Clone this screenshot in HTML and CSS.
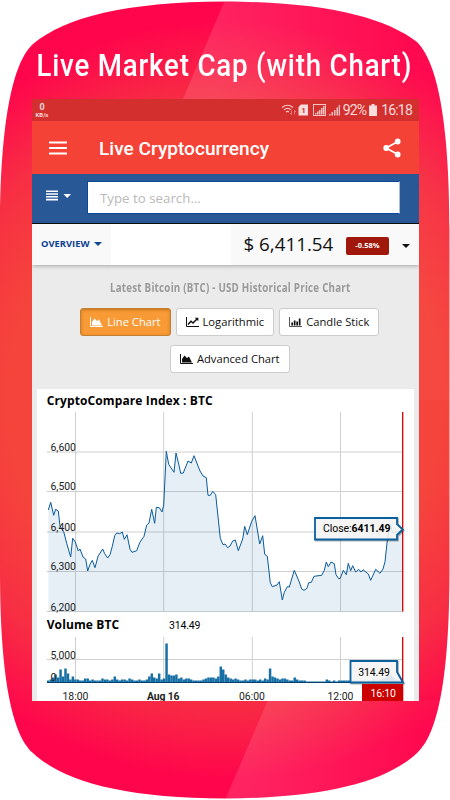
FILE: index.html
```html
<!DOCTYPE html>
<html lang="en">
    <head>
        <meta charset="utf-8">
        <title>Live Cryptocurrency</title>
        <link rel="stylesheet" href="styles.css">
        <script src="chart.js" defer></script>
    </head>
    <body>
        <div class="promo">
            <svg class="backdrop" viewBox="0 0 450 800">
                <defs>
                    <radialGradient id="red" gradientUnits="userSpaceOnUse" cx="225" cy="400" r="400">
                        <stop offset="0.55" stop-color="#f5443c"/>
                        <stop offset="0.75" stop-color="#f72e44"/>
                        <stop offset="0.95" stop-color="#ff054c"/>
                    </radialGradient>
                    <linearGradient id="shine" x1="0.1" y1="0" x2="0.85" y2="0">
                        <stop offset="0" stop-color="#fff" stop-opacity="0.12"/>
                        <stop offset="1" stop-color="#fff" stop-opacity="0.02"/>
                    </linearGradient>
                    <clipPath id="blob">
                        <path d="M225 1.500C125 2 66 17 33 44C9 66 0 140 0 230V570C0 662 9 732 33 753C64 782 125 798 225 798.500C325 798 386 782 417 753C441 732 449.500 662 449.500 570V230C449.500 140 441 66 417 42C384 17 325 2 225 1.500Z"/>
                    </clipPath>
                </defs>
                <g clip-path="url(#blob)">
                    <rect width="450" height="800" fill="url(#red)"/>
                    <path d="M225 0L183 99V400H450V0Z" fill="url(#shine)"/>
                    <path d="M268 700L225 800H450V700Z" fill="url(#shine)"/>
                </g>
            </svg>
            <h1 class="headline"><span>Live Market Cap (with Chart)</span></h1>

            <div class="phone">
                <div class="statusBar">
                    <div class="speed"><b>0</b><small>KB/s</small></div>
                    <div class="statusIcons">
                        <svg width="61" height="14" viewBox="0 0 61 14">
                            <g fill="none" stroke="#f5c5c5" stroke-width="1.2">
                                <path d="M1 4.500Q6.500 0 12 4.500M3 6.800Q6.500 4 10 6.800M5 9Q6.500 7.800 8 9"/>
                                <path d="M10.500 7.500V11.500M9 10L10.500 11.500M13.500 11.500V7.500M13.500 7.500L15 9" stroke-width="0.7" opacity="0.7"/>
                                <rect x="32.500" y="1.500" width="12" height="11" stroke-width="1"/>
                            </g>
                            <path fill="#fbdcdc" d="M17.500 4L20 1.500H27V12.500H17.500Z"/>
                            <text class="simNumber" x="20.300" y="10.300">1</text>
                            <path fill="#f5c5c5" d="M34 11.500V10H35.500V11.500ZM36 11.500V8.500H37.500V11.500ZM38 11.500V7H39.500V11.500ZM40 11.500V5H41.500V11.500ZM42 11.500V3H43.500V11.500ZM48 12.500V11H49.500V12.500ZM50.500 12.500V9H52V12.500ZM53 12.500V7H54.500V12.500ZM55.500 12.500V4.500H57V12.500ZM57.700 12.500V2H59V12.500Z"/>
                        </svg>
                        <span class="battery">92%</span>
                        <svg width="8" height="12" viewBox="0 0 8 12"><path fill="#f9dcdc" d="M0 1.500H2.500V0H5.500V1.500H8V12H0Z"/></svg>
                        <span class="clock">16:18</span>
                    </div>
                </div>

                <div class="appBar">
                    <svg width="18" height="14" viewBox="0 0 18 14"><path stroke="#fff" stroke-width="1.800" d="M0 1.500H18M0 7H18M0 12.500H18"/></svg>
                    <span class="appTitle">Live Cryptocurrency</span>
                    <svg width="18" height="20" viewBox="0 0 18 20">
                        <path fill="none" stroke="#fff" stroke-width="1.700" d="M15 3.500L3 10L15 16.500"/>
                        <g fill="#fff"><circle cx="14.700" cy="3.500" r="2.900"/><circle cx="3.200" cy="10" r="2.900"/><circle cx="14.700" cy="16.500" r="2.900"/></g>
                    </svg>
                </div>

                <div class="searchBar">
                    <svg width="25" height="11" viewBox="0 0 25 11">
                        <path stroke="#fff" stroke-width="1.600" d="M0 1.200H12M0 4H12M0 6.800H12M0 9.600H12"/>
                        <path fill="#fff" d="M17.500 4H25L21.200 8Z"/>
                    </svg>
                    <input type="text" placeholder="Type to search...">
                </div>

                <div class="coinBar">
                    <div class="overview"><span>OVERVIEW</span> <i class="caret"></i></div>
                    <div class="price">
                        <span class="amount">$ 6,411.54</span>
                        <span class="change">-0.58%</span>
                        <i class="caret dark"></i>
                    </div>
                </div>

                <div class="content">
                    <h2 class="chartTitle"><span>Latest Bitcoin (BTC) - USD Historical Price Chart</span></h2>
                    <div class="chartTypes">
                        <button class="active">
                            <svg width="13" height="10" viewBox="0 0 13 10"><path fill="none" stroke="currentColor" d="M.5 0V9.500H13"/><path fill="currentColor" d="M2 8.500V5L4.500 1.500L7 4L9 2.500L12 8.500Z"/></svg>
                            Line Chart
                        </button>
                        <button>
                            <svg width="13" height="10" viewBox="0 0 13 10"><path fill="none" stroke="currentColor" d="M.5 0V9.500H13"/><path fill="none" stroke="currentColor" stroke-width="1.500" d="M2 7.500L5 4.300L7 6L11 2"/><path fill="currentColor" d="M8.800 .8H12.300V4.300Z"/></svg>
                            Logarithmic
                        </button>
                        <button>
                            <svg width="13" height="10" viewBox="0 0 13 10"><path fill="none" stroke="currentColor" d="M.5 0V9.500H13" opacity="0.7"/><path fill="currentColor" d="M2.300 5.500H4V8.500H2.300ZM4.800 3.500H6.500V8.500H4.800ZM7.300 4.500H9V8.500H7.300ZM9.800 1.500H11.500V8.500H9.800Z"/></svg>
                            Candle Stick
                        </button>
                        <button>
                            <svg width="13" height="10" viewBox="0 0 13 10"><path fill="none" stroke="currentColor" d="M.5 0V9.500H13"/><path fill="currentColor" d="M2 8.500V5L4.500 1.500L7 4L9 2.500L12 8.500Z"/></svg>
                            Advanced Chart
                        </button>
                    </div>

                    <svg class="chart" viewBox="37 389 376.500 312.500">
                        <text class="name" x="46.700" y="404.500" textLength="166">CryptoCompare Index : BTC</text>
                        <path class="grid" d="M47 452H403M47 491.500H403M47 532H403M47 571.500H403M47 611.500H403M75.500 412V611.500M163.700 412V611.500M252.300 412V611.500M340.500 412V611.500"/>
                        <path class="area" id="area"/>
                        <path class="line" id="line"/>
                        <g class="axis">
                            <text x="50.500" y="450.700">6,600</text>
                            <text x="50.500" y="490.300">6,500</text>
                            <text x="50.500" y="530.700">6,400</text>
                            <text x="50.500" y="570.300">6,300</text>
                            <text x="50.500" y="610.700">6,200</text>
                        </g>
                        <path class="cursor" d="M402.700 412V611.500"/>
                        <path class="tip" d="M315 518H397V524L402.700 529.500L397 535V539.500H315Z"/>
                        <text class="tipText" x="323" y="531.600" textLength="67.500">Close:<tspan class="bold">6411.49</tspan></text>

                        <text class="name" x="46.700" y="629" textLength="72.500">Volume BTC</text>
                        <text class="tipText" x="169" y="629.200" textLength="31.500">314.49</text>
                        <path class="grid" d="M47 659.500H403M75.500 637V682M163.700 637V682M252.300 637V682M340.500 637V682"/>
                        <g class="bars" id="bars"></g>
                        <path class="base" d="M47 682.500H403"/>
                        <g class="axis">
                            <text x="50.500" y="658.700">5,000</text>
                            <text x="50.500" y="681">0</text>
                            <text x="62.500" y="700">18:00</text>
                            <text class="bold" x="147" y="700" textLength="32.500">Aug 16</text>
                            <text x="239" y="700">06:00</text>
                            <text x="327.500" y="700">12:00</text>
                        </g>
                        <path class="cursor" d="M402.700 637V682"/>
                        <path class="tip" d="M350.500 661H397V672L403 682.500H350.500Z"/>
                        <text class="tipText" x="358.300" y="675.700" textLength="31.500">314.49</text>
                        <rect class="timeTag" x="362" y="684" width="41.300" height="17.500"/>
                        <text class="tagText" x="370.500" y="697" textLength="25.500">16:10</text>
                    </svg>
                </div>
            </div>
        </div>
    </body>
</html>
```
FILE: chart.js
```js
// close price line, as x,y pairs
const points = `48.3,510 50.7,502.3 53.7,515.3 55.7,509.3 58.3,511 60,526 63.7,531.7 66.7,543.3 70.7,557 72.7,538.3 75.3,542
78.3,551 80,549 83,557 85.7,559 87.7,571 90,564.3 92.3,560.3 95,567.7 98,556.3 102.7,549 104.7,553.7 107.7,558 110,554.7
112.3,546.3 114.7,535.7 116.7,533 119.7,533.7 122.3,532 124.3,539.3 127,534.7 130,549.3 132,552.3 136.7,550.7 139.7,542.7
144,536.3 146.7,525 149,523 151.7,509.3 154.7,523.3 156.3,507.3 159.3,507.7 162,512 163.7,505 166.3,451.3 168.7,464.3
174,472.3 176,453 178.7,464 180.7,473.3 183.3,473 188,461 191.3,463 194,455.7 200,471 203,476 206.3,477.7 208,495.3
210.3,495.3 212.7,491.3 215.7,494.7 220.3,538.3 223,544.7 225,544 227.7,547.7 230,546 232.7,541 235.3,540 238.3,550.7
242.7,539 244.7,526.3 247.3,534.7 251.7,521.3 255,515.7 259.7,544 262.7,535.7 264.7,554.3 267.3,556.3 270.3,582.7
272.3,586.7 277,585 279.3,581.7 282.3,600 284.3,592.3 287.3,586.7 289.3,587 294.3,570.3 299.3,582 301.7,589 304,590.3
307,588.3 308.7,582.7 311.3,582.3 314,576.3 321.7,575.3 324.3,570.3 326.3,562 328.3,566.7 331,562 334.3,563.7 336,574.7
338.7,578.7 340.3,578.3 343.3,570.3 346.3,574.7 348.3,563.3 350.7,570.7 352.7,565.7 355.7,572 358.7,569.3 361,572
363,569.7 368.3,574 370.7,580.3 375.7,569.3 380,573.3 383,569 385,561.7 387.7,536.7 390.3,524 392.3,532.7 395,532.3 402.5,530`;

// volume, one bar every ten minutes
const volumes = [
    2, 3, 5, 8, 5, 13, 6, 14, 9, 3, 6, 3, 3, 2, 2, 4, 4, 2, 3, 2, 2, 2, 4, 3, 3, 2, 3, 6, 3, 2,
    3, 3, 2, 4, 3, 2, 2, 3, 2, 2, 3, 6, 9, 5, 4, 9, 3, 4, 39, 8, 7, 7, 8, 4, 5, 3, 4, 4, 3, 2,
    2, 2, 2, 3, 4, 5, 5, 5, 4, 6, 16, 13, 8, 5, 4, 3, 4, 3, 2, 2, 3, 2, 3, 3, 3, 2, 3, 2, 4, 3,
    14, 6, 5, 4, 3, 4, 4, 3, 2, 2, 5, 3, 2, 2, 2, 1, 1, 1, 1, 1, 1, 1, 1, 3, 2, 1, 2, 1, 2, 2,
    2, 2, 2, 2, 2, 2, 2, 2, 2, 1, 2, 2, 3, 2, 2, 3, 4, 5, 7, 7, 5, 3, 2, 2
];

document.getElementById('line').setAttribute('d', 'M' + points);
document.getElementById('area').setAttribute('d', 'M' + points + 'V611.5H48.3Z');

const bars = document.getElementById('bars');
volumes.forEach((height, i) => {
    const bar = document.createElementNS('http://www.w3.org/2000/svg', 'rect');
    bar.setAttribute('x', 47 + i * 2.465);
    bar.setAttribute('y', 682.5 - height);
    bar.setAttribute('width', 2.465);
    bar.setAttribute('height', height);
    bars.append(bar);
});
```
FILE: styles.css
```css
* {
    box-sizing: border-box;
}
body {
    margin: 0;
    background: #fff;
    font-family: "Open Sans", sans-serif;
}
.promo {
    width: 450px;
    height: 800px;
    position: relative;
    overflow: hidden;
}
.backdrop {
    position: absolute;
    left: 0;
    top: 0;
    width: 450px;
    height: 800px;
}
.headline {
    position: relative;
    height: 99px;
    margin: 0;
    padding-top: 47px;
    line-height: 38px;
    font-family: Roboto, sans-serif;
    font-size: 31px;
    font-weight: 500;
    color: #fff;
    text-align: center;
    white-space: nowrap;
}
.headline span {
    display: inline-block;
    margin-left: -2px;
    letter-spacing: 0.9px;
    transform: scaleX(0.893);
}
.phone {
    position: relative;
    width: 387px;
    height: 602px;
    margin-left: 31.5px;
    overflow: hidden;
    background: #ebebeb;
}

/* status bar */
.statusBar {
    height: 22px;
    padding: 0 6.5px 0 4px;
    display: flex;
    justify-content: space-between;
    align-items: center;
    background: #d32f2f;
    font-family: Roboto, sans-serif;
    color: #fbdcdc;
}
.speed {
    display: grid;
    text-align: center;
    line-height: 7px;
}
.speed b {
    font-size: 9px;
    line-height: 9px;
}
.speed small {
    font-size: 6px;
    font-weight: 700;
    line-height: 5px;
}
.statusIcons {
    display: flex;
    align-items: center;
}
.simNumber {
    font-size: 8px;
    font-weight: 700;
    fill: #d32f2f;
}
.battery, .clock {
    font-size: 14px;
    letter-spacing: -0.9px;
}
.battery {
    margin: 0 3px 0 1px;
}
.clock {
    margin-left: 4px;
    letter-spacing: -0.8px;
}

/* app bar */
.appBar {
    height: 53px;
    padding: 0 18px 0 17px;
    display: flex;
    align-items: center;
    background: #f44336;
}
.appTitle {
    flex: 1;
    margin-left: 32.5px;
    padding-top: 2px;
    font-family: Roboto, sans-serif;
    font-size: 19.1px;
    font-weight: 500;
    color: #fff;
}

/* search */
.searchBar {
    height: 50px;
    padding: 0 18.5px 2px 14px;
    display: flex;
    align-items: center;
    justify-content: space-between;
    background: #295896;
    border-bottom: 1px solid #0c0c0c;
}
.searchBar svg {
    margin-top: -4px;
}
.searchBar input {
    width: 313px;
    height: 33px;
    padding: 0 12px;
    border: 1px solid #0b4a9b;
    border-right-color: #a9bfdd;
    font-family: "Open Sans", sans-serif;
    font-size: 13.3px;
    outline: none;
}
.searchBar input::placeholder {
    color: #b9b9b9;
}

/* coin bar */
.coinBar {
    position: relative;
    height: 41px;
    display: flex;
    justify-content: space-between;
    background: #fff;
    box-shadow: 0 1px 4px rgba(0,0,0,0.3);
}
.overview, .price {
    display: flex;
    align-items: center;
    background: #f9f9f9;
}
.overview {
    width: 79px;
    padding: 0 0 2px 9.5px;
    gap: 4px;
    font-size: 9.4px;
    font-weight: 700;
    color: #0e3f93;
    white-space: nowrap;
}
.caret {
    border: 4px solid transparent;
    border-top-color: #0e4a93;
    border-bottom: 0;
}
.caret.dark {
    border-top-color: #111;
}
.price {
    width: 188px;
    padding: 2px 9px 0 13px;
    justify-content: space-between;
}
.amount {
    margin-top: -3px;
    font-size: 18.8px;
    color: #111;
}
.change {
    width: 43px;
    height: 18px;
    line-height: 17px;
    border-radius: 2px;
    background: #a0180b;
    color: #fff;
    font-size: 7.5px;
    font-weight: 700;
    text-align: center;
}

/* chart area */
.content {
    padding: 13px 5px 0 5.5px;
}
.chartTitle {
    height: 19px;
    margin: 0 0 11px;
    padding-left: 10px;
    font-size: 12.7px;
    line-height: 18px;
    color: #999;
    text-align: center;
    white-space: nowrap;
}
.chartTitle span {
    display: inline-block;
    letter-spacing: 0.3px;
    transform: scaleX(0.77);
}
.chartTypes {
    display: flex;
    flex-wrap: wrap;
    justify-content: center;
    gap: 9px 5px;
    padding-left: 9px;
    margin-bottom: 15.5px;
}
.chartTypes button {
    height: 28px;
    padding: 0 9px 1px;
    display: flex;
    align-items: center;
    gap: 4px;
    border: 1px solid #ccc;
    border-radius: 3px;
    background: #fff;
    color: #111;
    font-family: "Open Sans", sans-serif;
    font-size: 11.2px;
    white-space: nowrap;
}
.chartTypes button.active {
    background: #f89a35;
    border-color: #c67e30;
    color: #fff;
    box-shadow: inset 0 1px 3px rgba(150,80,0,0.5);
}
.chart {
    display: block;
    width: 376.5px;
    height: 312.5px;
    background: #fff;
}
.name {
    font: 700 12px "Open Sans", sans-serif;
    fill: #000;
}
.grid {
    fill: none;
    stroke: #cfcfcf;
}
.area {
    fill: #1a6aab;
    fill-opacity: 0.11;
}
.line {
    fill: none;
    stroke: #0a5a9c;
    stroke-width: 1;
}
.axis text {
    font-family: Roboto, sans-serif;
    font-size: 10.4px;
    fill: #222;
}
.axis .bold, .bold {
    font-weight: 700;
}
.cursor {
    stroke: #c00;
    stroke-width: 1.3;
}
.tip {
    fill: #fff;
    fill-opacity: 0.85;
    stroke: #0a5f9c;
    stroke-width: 1.8;
    filter: drop-shadow(1px 1px 0.5px rgba(0,0,0,0.3));
}
.tipText {
    font: 10.5px Roboto, sans-serif;
    fill: #000;
}
.bars rect {
    fill: #166fa5;
}
.base {
    stroke: #043f72;
}
.timeTag {
    fill: #c00;
}
.tagText {
    font: 10.5px Roboto, sans-serif;
    fill: #fff;
}
```
